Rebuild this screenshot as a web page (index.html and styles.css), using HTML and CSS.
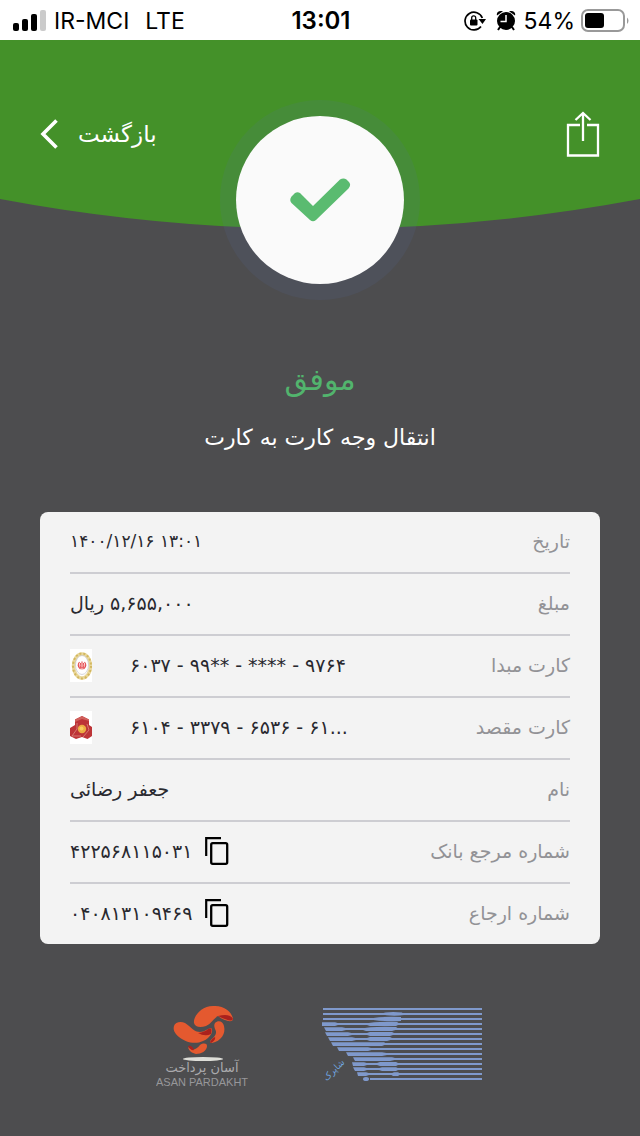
FILE: index.html
```html
<!DOCTYPE html>
<html lang="fa" dir="rtl">
<head>
<meta charset="utf-8">
<meta name="viewport" content="width=device-width, initial-scale=1">
<title>انتقال وجه کارت به کارت</title>
<link rel="stylesheet" href="styles.css">
</head>
<body>
<div class="status" dir="ltr">
  <div class="status-side">
    <svg class="signal" width="33" height="21" viewBox="0 0 33 21" aria-hidden="true">
      <rect x="0" y="13" width="6" height="8" rx="2"/><rect x="9" y="9" width="6" height="12" rx="2"/>
      <rect x="18" y="4" width="6" height="17" rx="2"/><rect x="27" y="0" width="6" height="21" rx="2" fill="#cbcbcb"/>
    </svg>
    <span>IR-MCI</span><span class="network">LTE</span>
  </div>
  <time class="clock">13:01</time>
  <div class="status-side status-end">
    <svg width="22" height="22" viewBox="0 0 22 22" aria-hidden="true">
      <path d="M18.300 8A8.900 8.900 0 1 0 17 16.500" fill="none" stroke="#000" stroke-width="1.700"/>
      <path d="M14.500 9H22l-3.500 5z"/><rect x="6" y="9.500" width="7.500" height="6" rx="1"/>
      <path d="M7.700 10V7.800a2 2 0 0 1 4 0V10" fill="none" stroke="#000" stroke-width="1.300"/>
    </svg>
    <svg class="alarm" width="20" height="21" viewBox="0 0 20 21" aria-hidden="true">
      <circle cx="10" cy="11" r="9"/><path d="M1 5.500C0 2 3 0 7 1.300zM19 5.500C20 2 17 0 13 1.300z"/>
      <path d="M4 17l-2 3M16 17l2 3" stroke="#000" stroke-width="2"/><path d="M10 5V11.500H4.500" fill="none" stroke="#fff" stroke-width="1.500"/>
    </svg>
    <span>54%</span>
    <svg class="battery" width="48" height="24" viewBox="0 0 48 24" aria-hidden="true">
      <rect x="1" y="1" width="42" height="21" rx="6" fill="#fff" stroke="#999" stroke-width="2"/>
      <rect x="4" y="4" width="19" height="15" rx="3"/><path d="M46 8.500q3 3 0 6.500z" fill="#999"/>
    </svg>
  </div>
</div>

<header class="hero" dir="ltr">
  <svg class="hero-bg" viewBox="0 0 640 190" preserveAspectRatio="none" aria-hidden="true"><path d="M0 0H640V159Q320 219 0 159Z" fill="#449129"/></svg>
  <button class="back" type="button">
    <svg width="18" height="30" viewBox="0 0 18 30" aria-hidden="true"><path d="M16.500 1.500L3 15 16.500 28.500" fill="none" stroke="#fff" stroke-width="3.600"/></svg>
    <span dir="rtl">بازگشت</span>
  </button>
  <div class="badge">
    <svg width="62" height="44" viewBox="0 0 62 44" role="img" aria-label="موفق"><path d="M2.500 18.500L6 15Q8.500 13.500 11 15L24 28 51 1.500Q54.500-.500 57.500 1.500L60 4Q62.500 7 59.500 10.500L27 42Q24 44.500 21 42L2.500 25Q0 22 2.500 18.500Z" fill="#5abb70"/></svg>
  </div>
  <button class="share" type="button" aria-label="اشتراک‌گذاری">
    <svg width="34" height="46" viewBox="0 0 34 46" aria-hidden="true"><path d="M14 14H2V44.500H32V14H21M17 30V3M9.500 9L17 2l7.500 7" fill="none" stroke="#fff" stroke-width="2.300"/></svg>
  </button>
</header>

<main class="main">
  <h1 class="result">موفق</h1>
  <p class="operation">انتقال وجه کارت به کارت</p>

  <dl class="card">
    <div class="row"><dt>تاریخ</dt><dd class="date" dir="ltr">۱۴۰۰/۱۲/۱۶ ۱۳:۰۱</dd></div>
    <div class="row"><dt>مبلغ</dt><dd>۵,۶۵۵,۰۰۰ ریال</dd></div>
    <div class="row"><dt>کارت مبدا</dt>
      <dd class="bank" dir="ltr">
        <svg width="22" height="33" viewBox="0 0 22 33" aria-hidden="true">
          <rect width="22" height="33" fill="#fff"/>
          <ellipse cx="12" cy="17" rx="8.500" ry="12" fill="none" stroke="#e9d79c" stroke-width="3.500"/>
          <ellipse cx="12" cy="17" rx="9" ry="12.500" fill="none" stroke="#d2b75f" stroke-width="2" stroke-dasharray="2 2"/>
          <ellipse cx="12" cy="16" rx="6.500" ry="9.500" fill="#fff" stroke="#b9b9c4" stroke-width=".6"/>
          <path d="M9.500 13q-3 3.500 1 7M14.500 13q3 3.500-1 7M12 12.500V20.500M10.500 14q-1 3 .5 5M13.500 14q1 3-.5 5" fill="none" stroke="#e5474c" stroke-width="1.100"/>
        </svg>
        <span>۶۰۳۷ - ۹۹** - **** - ۹۷۶۴</span>
      </dd></div>
    <div class="row"><dt>کارت مقصد</dt>
      <dd class="bank" dir="ltr">
        <svg width="22" height="33" viewBox="0 0 22 33" aria-hidden="true">
          <rect width="22" height="33" fill="#fff"/>
          <path d="M12 5l7 3.500V14l3 2v9l-4.500 3-5.500-2-6 2-6-3v-8l5-3V8.500z" fill="#bd3437"/>
          <path d="M12 5l7 3.500V10l-7-2-7 3V8.500z" fill="#d0605c"/><path d="M7 12v6l-5 7h9M17 13l2 6-6 7" fill="none" stroke="#e6a397" stroke-width=".6"/>
          <circle cx="12" cy="18" r="4.200" fill="#ecac43"/><circle cx="11.500" cy="17.500" r="2" fill="#f9cd61"/>
        </svg>
        <span>۶۱۰۴ - ۳۳۷۹ - ۶۵۳۶ - ۶۱...</span>
      </dd></div>
    <div class="row"><dt>نام</dt><dd>جعفر رضائی</dd></div>
    <div class="row"><dt>شماره مرجع بانک</dt>
      <dd class="copyable" dir="ltr"><span>۴۲۲۵۶۸۱۱۵۰۳۱</span>
        <button class="copy" type="button" aria-label="کپی شماره مرجع بانک"><svg width="24" height="28" viewBox="0 0 24 28" aria-hidden="true"><path d="M1.200 19V1.200H16" fill="none" stroke="#000" stroke-width="2.200"/><rect x="6.200" y="6.200" width="16" height="20.600" rx="1.500" fill="none" stroke="#000" stroke-width="2.300"/></svg></button></dd></div>
    <div class="row"><dt>شماره ارجاع</dt>
      <dd class="copyable" dir="ltr"><span>۰۴۰۸۱۳۱۰۹۴۶۹</span>
        <button class="copy" type="button" aria-label="کپی شماره ارجاع"><svg width="24" height="28" viewBox="0 0 24 28" aria-hidden="true"><path d="M1.200 19V1.200H16" fill="none" stroke="#000" stroke-width="2.200"/><rect x="6.200" y="6.200" width="16" height="20.600" rx="1.500" fill="none" stroke="#000" stroke-width="2.300"/></svg></button></dd></div>
  </dl>
</main>

<footer class="logos" dir="ltr">
  <svg width="96" height="86" viewBox="-1 0 96 86">
    <g fill="#e4592f">
      <path d="M37 19C36 13 44 2 56 2C67 1 75 8 76 15C76 19 67 17 61 12C57 14 54 20 49 22C43 24 38 23 37 19Z"/>
      <path d="M17 22C18 18 24 17 28 19C34 23 37 28 43 28C48 28 51 24 54 24C57 26 54 34 46 37C38 41 28 38 22 33C17 29 16 25 17 22Z"/>
      <path d="M58 19C61 16 66 17 67 22C69 30 64 37 55 39C52 39 53 36 56 34C59 31 60 28 58 25C57 22 57 21 58 19Z"/>
      <path d="M31 43C35 47 39 46 43 41C46 39 50 39 50 42C50 47 44 50 39 50C35 49 32 47 31 43Z"/>
    </g>
    <path d="M61 12Q73 9 76 15Q75 19 61 12ZM41 29Q48 28 51 25Q56 22 54 30Q48 33 41 29ZM53 38Q55 34 58 33Q59 36 54 39ZM31 42Q35 41 37 46Q34 47 31 42Z" fill="#aa211d"/>
    <ellipse cx="46" cy="55" rx="20" ry="2" fill="#deded8"/>
    <text class="asan-fa" x="45" y="68">آسان پرداخت</text>
    <text class="asan-en" x="45" y="82">ASAN PARDAKHT</text>
  </svg>
  <svg width="162" height="86" viewBox="0 -1 162 86">
    <path d="M1 4H160M1 9H160M1 14H160M5 19H160M8 24H160M10 29H160M13 34H160M17 39H160M22 44H160M32 49H160M36 54H160M36 59H160M37 64H160M41 69H160M48 74H160" stroke="#7f99cc" stroke-width="1.800"/>
    <g fill="#7f99cc">
      <path d="M57 9Q66 6 80 7.500L82 10Q70 12 57 9ZM46 14Q60 11 79 12V16Q60 17 46 14ZM0 17.200H13L19 19 13 21H0ZM42 19Q54 16 75 17L78 19 74 21H48ZM2 22.200H20L28 24 20 26H4ZM38 24Q50 21 74 22L77 24 70 26H44ZM3 27.200H26L34 29 26 31H5ZM42 29L48 27H70L74 29 68 31H48ZM6 32.200H30L38 34 30 36H8ZM42 34L48 32H68L72 34 65 36H48ZM9 37.200H62L65 39 60 41H11ZM15 42.200H46L53 44 46 46H17ZM24 47.200H60L70 49 60 51H26ZM31 52.200H70L77 54 68 56H33ZM30 57.200H42L48 59 42 61H31ZM52 59L58 57H74L78 59 74 61H58ZM31 62.200H42L48 64 42 66H33ZM54 64L60 62.200H74L78 64 74 66H60ZM35 67.200H44L50 69 44 71H36ZM68 69L72 67.200H76L79 69 76 71H71Z"/><ellipse cx="44" cy="74" rx="3" ry="2"/>
    </g>
    <text class="shaparak" transform="translate(14 67) rotate(-45)">شاپرک</text>
  </svg>
</footer>
</body>
</html>
```

FILE: styles.css
```css
* { box-sizing: border-box; }

body {
  margin: 0;
  min-height: 100vh;
  background: #4d4d4f;
  color: #29292f;
  font-family: "DejaVu Sans", sans-serif;
}

button {
  padding: 0;
  border: 0;
  background: none;
  color: inherit;
  font: inherit;
  cursor: pointer;
}

svg { display: block; flex: none; }

.status {
  display: grid;
  grid-template-columns: 1fr auto 1fr;
  align-items: center;
  height: 40px;
  padding: 1px 11px 0 13px;
  background: #fff;
  color: #000;
  font-family: Inter, sans-serif;
  font-size: 23px;
}

.status-side { display: flex; align-items: center; gap: 8px; }
.status-end { justify-content: flex-end; }
.network { margin-left: 8px; }
.clock { font-size: 24px; font-weight: 600; }
.alarm { margin-left: 2px; }
.battery { margin-left: -2px; }

.hero {
  position: relative;
  display: grid;
  grid-template-columns: 1fr auto 1fr;
  align-items: start;
  padding: 60px 40px 0;
}

.hero-bg {
  position: absolute;
  top: 0;
  left: 0;
  width: 100%;
  height: 190px;
  z-index: -1;
}

.back {
  display: flex;
  align-items: center;
  justify-self: start;
  gap: 20px;
  height: 68px;
  color: #fff;
  font-size: 23px;
}

.share { justify-self: end; height: 68px; }

.badge {
  display: grid;
  place-items: center;
  width: 200px;
  height: 200px;
  border: 16px solid rgba(88, 105, 170, .13);
  border-radius: 50%;
  background: #fafafa;
  background-clip: padding-box;
}

.main { padding: 56px 40px 0; }

.result {
  margin: 0;
  color: #52b46d;
  font-size: 30px;
  font-weight: 400;
  line-height: 48px;
  text-align: center;
}

.operation {
  margin: 16px 0 56px;
  color: #fff;
  font-size: 22px;
  line-height: 36px;
  text-align: center;
}

.card {
  margin: 0;
  padding: 0 30px;
  border-radius: 8px;
  background: #f3f3f3;
  font-size: 19px;
}

.row {
  display: flex;
  align-items: center;
  justify-content: space-between;
  height: 62px;
  padding-bottom: 2px;
  border-bottom: 2px solid #cdcdd2;
}

.row:last-child { height: 60px; border-bottom: 0; }

dt { color: #929296; }
dd { margin: 0; white-space: nowrap; }

.date { font-size: 17px; }
.bank { display: flex; align-items: center; gap: 38px; }
.copyable { display: flex; align-items: center; gap: 13px; }

.logos {
  display: flex;
  align-items: flex-start;
  justify-content: center;
  gap: 70px;
  padding: 60px 0 16px;
}

.asan-fa { fill: #aaaaad; font-size: 13px; text-anchor: middle; }
.asan-en { fill: #97979a; font-family: "Liberation Sans", sans-serif; font-size: 11px; text-anchor: middle; }
.shaparak { fill: #70a4df; font-size: 9px; text-anchor: middle; }
```
